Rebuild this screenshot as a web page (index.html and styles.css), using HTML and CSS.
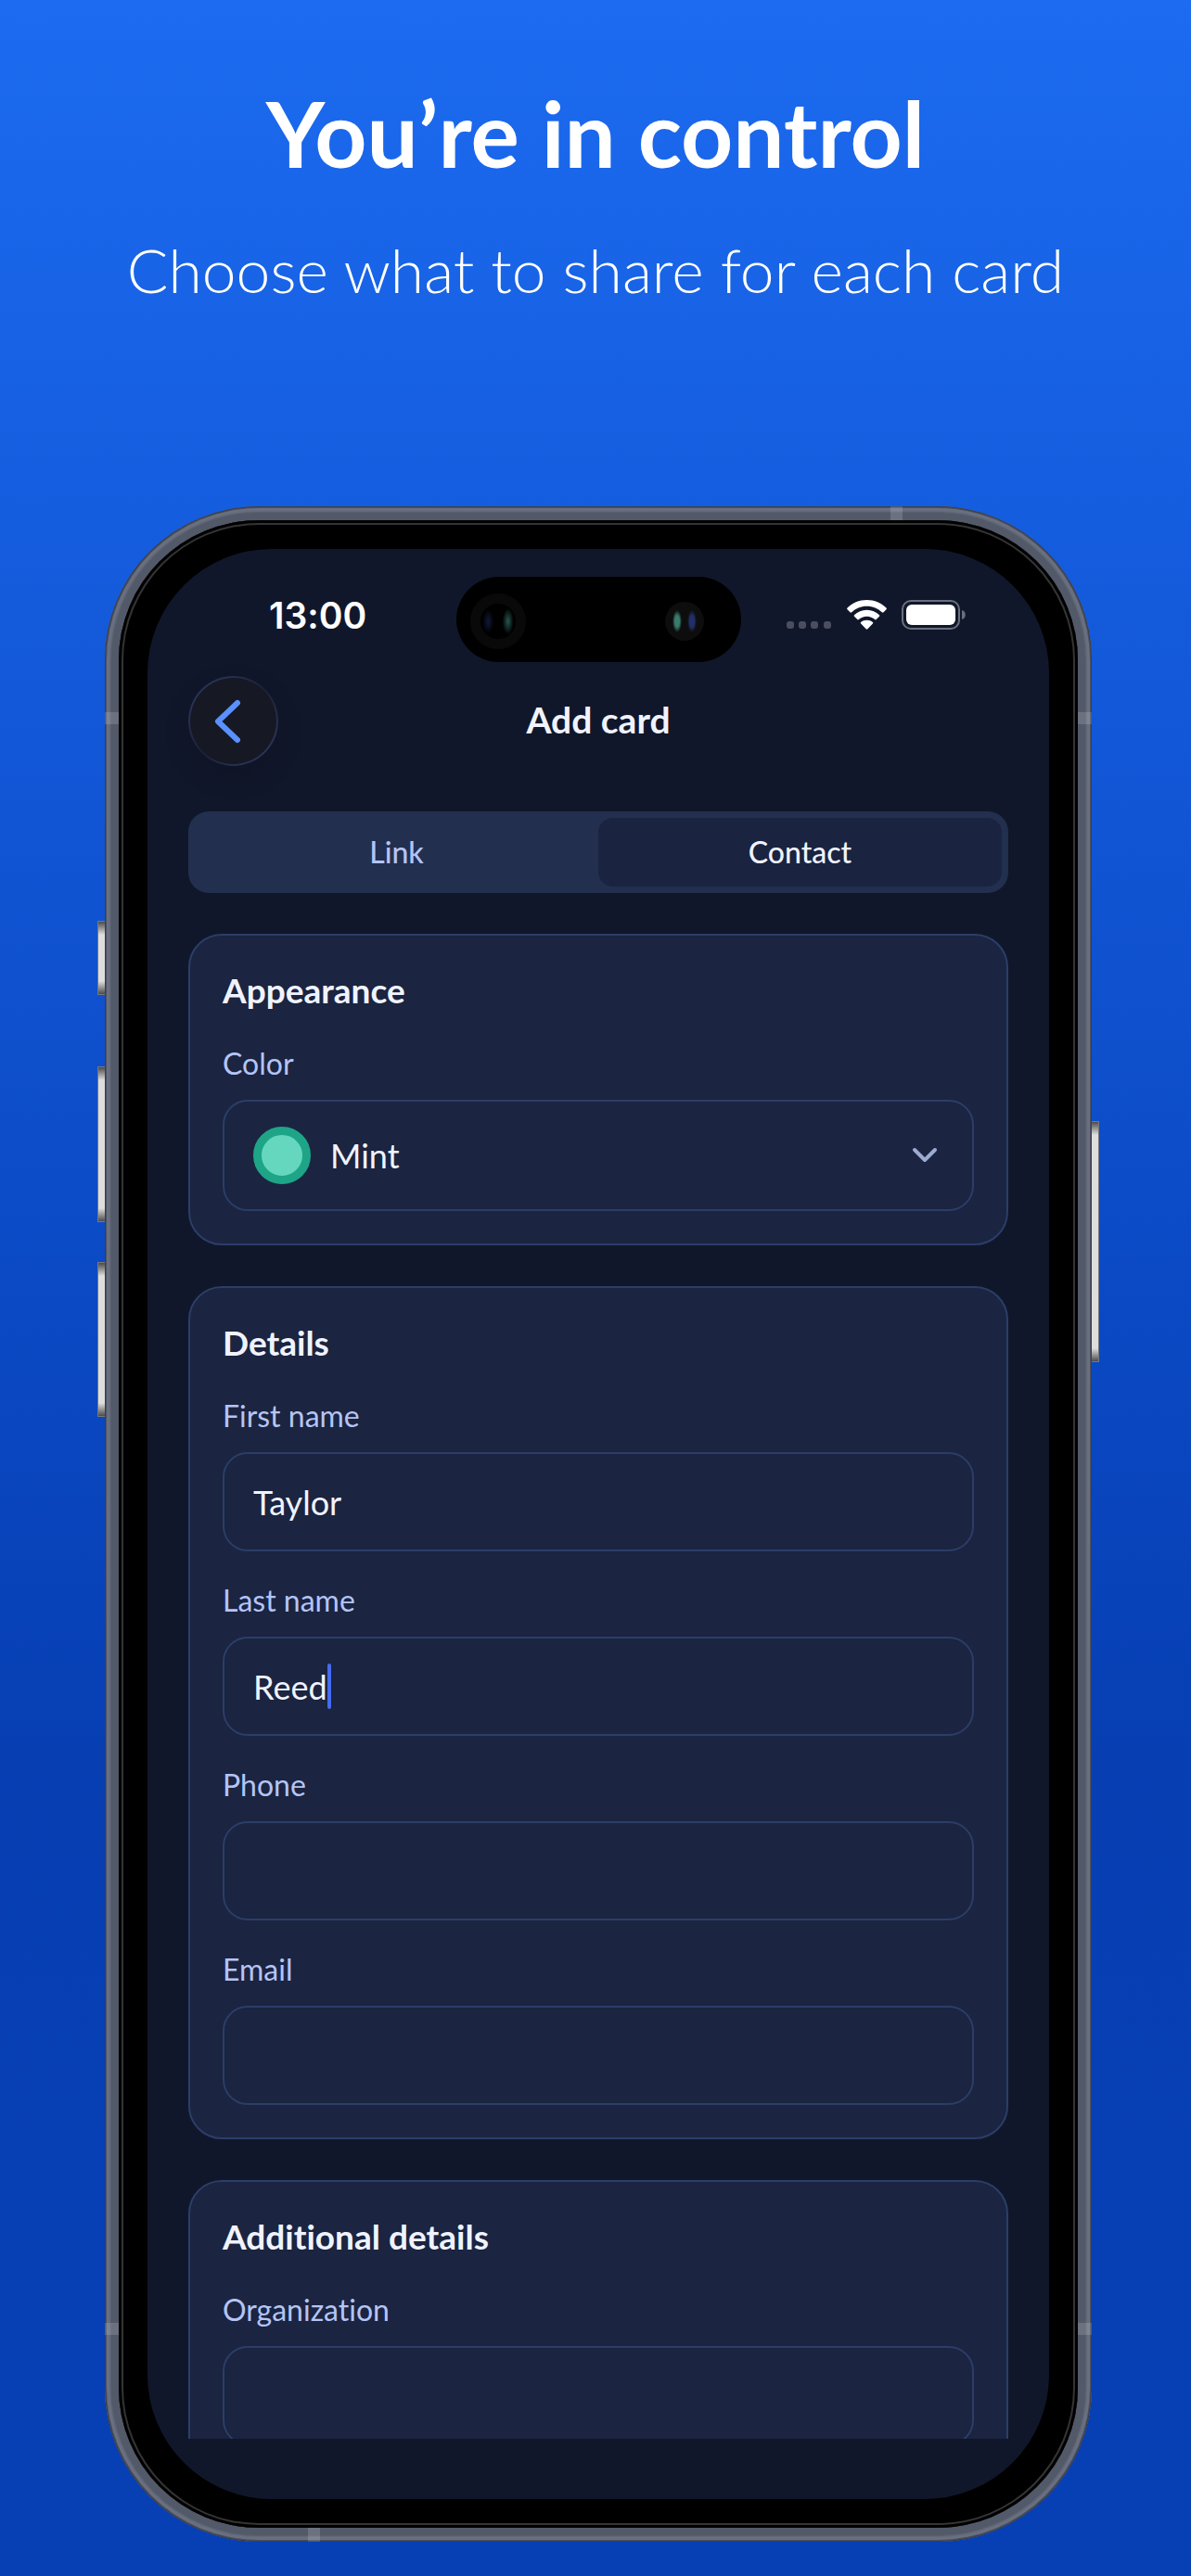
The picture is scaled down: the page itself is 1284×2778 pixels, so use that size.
FILE: index.html
```html
<!DOCTYPE html>
<html lang="en">
<head>
<meta charset="utf-8">
<meta name="viewport" content="width=device-width, initial-scale=1">
<title>You’re in control</title>
<link rel="stylesheet" href="styles.css">
</head>
<body>
<main class="page">
  <header class="intro">
    <h1 class="intro-title">You’re in control</h1>
    <p class="intro-text">Choose what to share for each card</p>
  </header>

  <section class="phone" aria-label="Add card screen">
    <span class="key key-action"></span>
    <span class="key key-up"></span>
    <span class="key key-down"></span>
    <span class="key key-power"></span>
    <span class="band band-top"></span>
    <span class="band band-bottom"></span>
    <span class="band band-left-top"></span>
    <span class="band band-left-bottom"></span>
    <span class="band band-right-top"></span>
    <span class="band band-right-bottom"></span>

    <div class="bezel">
      <div class="screen">
        <div class="status">
          <time class="clock">13:00</time>
          <div class="island">
            <span class="lens lens-large"></span>
            <span class="lens lens-small"></span>
          </div>
          <div class="indicators">
            <svg class="signal" width="50" height="32" viewBox="0 0 50 32" aria-hidden="true">
              <g fill="#4a4e5e"><rect x="1" y="23" width="8" height="8" rx="3"/><rect x="14" y="23" width="8" height="8" rx="3"/><rect x="27" y="23" width="8" height="8" rx="3"/><rect x="41" y="23" width="8" height="8" rx="3"/></g>
            </svg>
            <svg class="wifi" width="43" height="32" viewBox="0 0 43 32" aria-hidden="true">
              <g fill="#fff">
                <path d="M21.500 0 C29.800 0 37.200 3.200 42.500 8.600 C43 9.100 43 9.800 42.500 10.300 L39.500 13.300 C39 13.800 38.400 13.800 37.900 13.300 C33.600 9.200 27.900 6.700 21.500 6.700 C15.100 6.700 9.400 9.200 5.100 13.300 C4.600 13.800 4 13.800 3.500 13.300 L.5 10.300 C0 9.800 0 9.100 .5 8.600 C5.800 3.200 13.200 0 21.500 0 Z"/>
                <path d="M21.500 10.800 C26.800 10.800 31.500 12.900 35 16.200 C35.500 16.700 35.500 17.300 35 17.800 L31.700 21.100 C31.200 21.600 30.700 21.500 30.200 21.100 C27.900 19 24.800 17.700 21.500 17.700 C18.200 17.700 15.100 19 12.800 21.100 C12.300 21.500 11.800 21.600 11.300 21.100 L8 17.800 C7.500 17.300 7.500 16.700 8 16.200 C11.500 12.900 16.200 10.800 21.500 10.800 Z"/>
                <path d="M21.500 21.800 C24 21.800 26.200 22.600 27.900 24 C28.400 24.400 28.400 25 27.900 25.500 L22.400 31.200 C21.800 31.800 21.200 31.800 20.600 31.200 L15.100 25.500 C14.600 25 14.600 24.400 15.100 24 C16.800 22.600 19 21.800 21.500 21.800 Z"/>
              </g>
            </svg>
            <svg class="battery" width="69" height="32" viewBox="0 0 69 32" aria-hidden="true">
              <rect x="1" y="1" width="61" height="30" rx="9" fill="none" stroke="#6b6f7e" stroke-width="2"/>
              <rect x="5" y="5" width="53" height="22" rx="6" fill="#fff"/>
              <path d="M65 11 C70 12 70 20 65 21 Z" fill="#6b6f7e"/>
            </svg>
          </div>
        </div>

        <nav class="topbar">
          <button class="back" type="button" aria-label="Back">
            <svg width="30" height="48" viewBox="0 0 30 48" aria-hidden="true"><path d="M26 4 L5 24 L26 44" fill="none" stroke="#5a90ff" stroke-width="6" stroke-linecap="round" stroke-linejoin="round"/></svg>
          </button>
          <h2 class="topbar-title">Add card</h2>
        </nav>

        <form class="form">
          <div class="tabs" role="tablist">
            <button class="tab" type="button" role="tab" aria-selected="false">Link</button>
            <button class="tab tab-active" type="button" role="tab" aria-selected="true">Contact</button>
          </div>

          <section class="card">
            <h3 class="card-title">Appearance</h3>
            <div class="field">
              <label class="label" for="color">Color</label>
              <div class="control">
                <select class="input input-select" id="color">
                  <option>Mint</option>
                </select>
                <span class="swatch"></span>
                <svg class="chevron" width="28" height="18" viewBox="0 0 28 18" aria-hidden="true"><path d="M3 3 L14 14 L25 3" fill="none" stroke="#9dabd2" stroke-width="4" stroke-linecap="round" stroke-linejoin="round"/></svg>
              </div>
            </div>
          </section>

          <section class="card">
            <h3 class="card-title">Details</h3>
            <div class="field">
              <label class="label" for="first">First name</label>
              <input class="input" id="first" type="text" value="Taylor">
            </div>
            <div class="field">
              <label class="label" for="last">Last name</label>
              <div class="control">
                <input class="input" id="last" type="text" value="Reed">
                <span class="caret"></span>
              </div>
            </div>
            <div class="field">
              <label class="label" for="phone">Phone</label>
              <input class="input" id="phone" type="tel">
            </div>
            <div class="field">
              <label class="label" for="email">Email</label>
              <input class="input" id="email" type="email">
            </div>
          </section>

          <section class="card">
            <h3 class="card-title">Additional details</h3>
            <div class="field">
              <label class="label" for="org">Organization</label>
              <input class="input" id="org" type="text">
            </div>
          </section>
        </form>
      </div>
    </div>
  </section>
</main>
</body>
</html>
```

FILE: styles.css
```css
* {
  box-sizing: border-box;
}

body {
  margin: 0;
  font-family: Lato, "Open Sans", sans-serif;
  font-variant-ligatures: none;
  color: #f0f3ff;
}

h1, h2, h3, p {
  margin: 0;
}

.page {
  min-height: 100vh;
  padding: 85px 107px 37px 113px;
  background: linear-gradient(180deg, #1c6bf0 0%, #155ddf 20%, #0f51cf 38%, #0a47c1 54%, #073fb3 68%, #073fb5 100%);
}

/* Heading above the phone */
.intro {
  display: flex;
  flex-direction: column;
  gap: 52px;
  margin: 0 -60px 217px -66px;
  text-align: center;
  color: #fff;
}

.intro-title {
  font-size: 98px;
  line-height: 116px;
  font-weight: 700;
}

.intro-text {
  font-size: 66px;
  line-height: 76px;
  font-weight: 300;
}

/* Phone body */
.phone {
  position: relative;
  display: flex;
  aspect-ratio: 1064 / 2195;
  min-height: 0;
  padding: 15px;
  border-radius: 166px;
  background: #525968;
  box-shadow: inset 0 0 0 1px #393f4b, inset 0 0 0 2px #4c5260, inset 0 0 2px 6px #6a7080;
}

.key {
  position: absolute;
  left: -8px;
  width: 8px;
  border: 1px solid #77787c;
  border-right: 0;
  background: linear-gradient(180deg, #4c4c4c, #dedede 14px, #dedede calc(100% - 14px), #4c4c4c);
}

.key-action { top: 447px; height: 80px; }
.key-up { top: 604px; height: 168px; }
.key-down { top: 815px; height: 167px; }
.key-power {
  top: 663px;
  left: auto;
  right: -8px;
  height: 260px;
  border: 1px solid #77787c;
  border-left: 0;
}

.band {
  position: absolute;
  width: 15px;
  height: 13px;
  background: rgba(255, 255, 255, 0.15);
}

.band-top { top: 0; right: 204px; width: 13px; height: 15px; }
.band-bottom { bottom: 0; left: 219px; width: 13px; height: 15px; }
.band-left-top { top: 222px; left: 0; }
.band-right-top { top: 222px; right: 0; }
.band-left-bottom { bottom: 223px; left: 0; }
.band-right-bottom { bottom: 223px; right: 0; }

.bezel {
  display: flex;
  flex: 1;
  min-width: 0;
  min-height: 0;
  padding: 31px;
  border-radius: 151px;
  background: #000;
  box-shadow: inset 0 0 0 3px #000, inset 0 0 0 5px #343434;
}

.screen {
  display: flex;
  flex: 1;
  flex-direction: column;
  min-width: 0;
  min-height: 0;
  padding: 30px 0 65px;
  overflow: hidden;
  border-radius: 134px;
  background: #11172a;
}

/* Status bar */
.status {
  display: grid;
  grid-template-columns: 1fr 307px 1fr;
  height: 92px;
  flex-shrink: 0;
}

.clock {
  padding-left: 131px;
  font-family: Inter, "Liberation Sans", sans-serif;
  font-size: 39px;
  line-height: 84px;
  font-weight: 600;
  color: #fff;
}

.island {
  display: flex;
  align-items: center;
  justify-content: space-between;
  padding: 4px 40px 0 15px;
  border-radius: 46px;
  background: #000;
}

.lens {
  width: 60px;
  height: 60px;
  border: 11px solid #090909;
  border-radius: 50%;
  background:
    radial-gradient(ellipse 6px 13px at 22% 50%, #11193a, transparent),
    radial-gradient(ellipse 6px 14px at 78% 50%, #28574f, transparent),
    #000;
}

.lens-small {
  width: 42px;
  height: 42px;
  border: 0;
  background:
    radial-gradient(ellipse 5px 12px at 31% 50%, #397b6c 50%, transparent),
    radial-gradient(ellipse 5px 12px at 69% 50%, #22306a 50%, transparent),
    #0d0d0d;
}

.indicators {
  display: flex;
  align-items: center;
  justify-content: flex-end;
  gap: 16px;
  height: 82px;
  padding-right: 90px;
}

/* Navigation bar */
.topbar {
  display: grid;
  grid-template-columns: 97px 1fr 97px;
  align-items: center;
  flex-shrink: 0;
  padding: 15px 44px 49px;
}

.back {
  display: flex;
  align-items: center;
  justify-content: flex-start;
  height: 97px;
  padding: 0 0 0 25px;
  border: 2px solid transparent;
  border-radius: 50%;
  background:
    linear-gradient(#161823, #161823) padding-box,
    linear-gradient(135deg, #2f3c68, #1c2135 50%, #2f3c68) border-box;
  box-shadow: 0 12px 24px rgba(14, 17, 32, 0.3);
}

.topbar-title {
  padding-bottom: 4px;
  font-size: 39px;
  line-height: 48px;
  font-weight: 700;
  text-align: center;
}

/* Form */
.form {
  display: flex;
  flex: 1;
  flex-direction: column;
  gap: 44px;
  min-height: 0;
  padding: 0 44px;
  overflow: hidden;
}

.tabs,
.card {
  flex-shrink: 0;
}

.tabs {
  display: grid;
  grid-template-columns: 1fr 1fr;
  height: 88px;
  padding: 7px;
  border-radius: 22px;
  background: #222f4f;
}

.tab {
  padding: 0;
  border: 0;
  border-radius: 16px;
  background: transparent;
  font: 500 32px/40px Lato, "Open Sans", sans-serif;
  color: #b4c4f6;
}

.tab-active {
  background: #1a2340;
  color: #f0f3ff;
}

.card {
  display: flex;
  flex-direction: column;
  gap: 33px;
  padding: 35px;
  border: 2px solid #2b3e69;
  border-radius: 36px;
  background: #1b2440;
}

.card-title {
  margin-bottom: 2px;
  font-size: 37px;
  line-height: 48px;
  font-weight: 700;
}

.field {
  display: flex;
  flex-direction: column;
  gap: 19px;
}

.label {
  font-size: 32px;
  line-height: 40px;
  color: #b4c4f6;
}

.control {
  position: relative;
  display: flex;
}

.input {
  width: 100%;
  height: 107px;
  padding: 0 31px;
  border: 2px solid #2b3e69;
  border-radius: 27px;
  outline: 0;
  background: transparent;
  font: 400 36px/48px Lato, "Open Sans", sans-serif;
  color: #f0f3ff;
}

.input-select {
  height: 120px;
  padding-left: 114px;
  appearance: none;
}

.swatch {
  position: absolute;
  top: 29px;
  left: 33px;
  width: 62px;
  height: 62px;
  border: 9px solid #1ea587;
  border-radius: 50%;
  background: #66d7bf;
  pointer-events: none;
}

.chevron {
  position: absolute;
  top: 51px;
  right: 39px;
  pointer-events: none;
}

.caret {
  position: absolute;
  top: 29px;
  left: 113px;
  width: 4px;
  height: 49px;
  border-radius: 2px;
  background: #466bf0;
}
```
